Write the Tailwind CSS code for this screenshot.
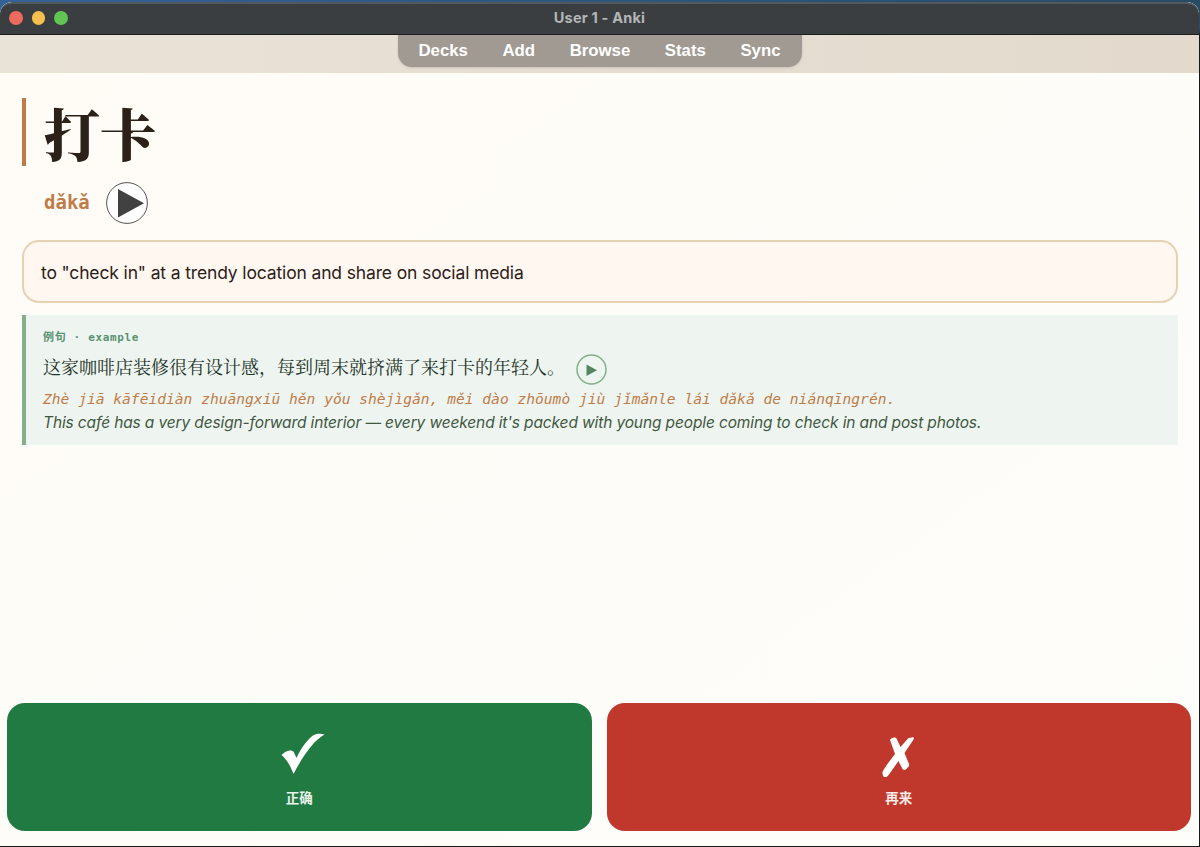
<!DOCTYPE html>
<html lang="zh-CN">
<head>
  <meta charset="utf-8">
  <title>User 1 - Anki</title>
  <script src="https://cdn.jsdelivr.net/npm/@tailwindcss/browser@4"></script>
</head>
<body class="h-[847px] w-[1200px] overflow-hidden bg-gradient-to-r from-[#356199] to-[#294a63] font-['Inter','Noto_Sans_CJK_SC',sans-serif]">
  <div class="h-full bg-[linear-gradient(to_bottom,transparent_30px,#16181a_36px)] pt-[2px]">
    <div class="flex h-[844px] w-[1199px] flex-col overflow-hidden rounded-t-[12px] bg-gradient-to-br from-[#fffcf6] to-[#fdfdfa]">

      <!-- title bar -->
      <header class="grid h-[33px] shrink-0 grid-cols-3 items-center rounded-t-[12px] border-t-2 border-b border-t-[#505a5e] border-b-[#1b1d20] bg-[#3b3e40] pr-[9px] pb-[2px] pl-[9px]">
        <div class="flex gap-[9px]">
          <span class="size-[13.5px] rounded-full bg-[#ed6a5e]"></span>
          <span class="size-[13.5px] rounded-full bg-[#f5bf4f]"></span>
          <span class="size-[13.5px] rounded-full bg-[#61c554]"></span>
        </div>
        <h1 class="text-center text-[14.5px] leading-5 font-bold tracking-[0.2px] text-[#b4b6b8]">User 1 - Anki</h1>
      </header>

      <nav class="flex h-[38px] shrink-0 justify-center bg-gradient-to-r from-[#e9e2d7] to-[#e3dacd]">
        <div class="flex h-[32px] w-[404px] items-center justify-between rounded-b-[14px] bg-[#a19a92] pr-[21px] pl-[21px] font-['Liberation_Sans',sans-serif] text-[16.8px] leading-[30px] font-bold text-white shadow-sm">
          <a>Decks</a>
          <a>Add</a>
          <a>Browse</a>
          <a>Stats</a>
          <a>Sync</a>
        </div>
      </nav>

      <main class="flex flex-1 flex-col px-[22px] pt-[25px]">
        <h2 class="h-[68px] border-l-[4px] border-[#c07c48] pl-[18px] font-['Noto_Serif_CJK_SC','Noto_Sans_CJK_SC',serif] text-[56px] leading-[68px] font-black text-[#2c2118]">打卡</h2>

        <div class="mt-4 flex h-[42px] items-center gap-4 pl-[22px]">
          <span class="pb-[3px] font-['DejaVu_Sans_Mono',monospace] text-[19px] leading-6 font-bold text-[#c07c48]">dǎkǎ</span>
          <svg class="size-[42px]" viewBox="0 0 42 42">
            <circle cx="21" cy="21" r="20.4" fill="#fff" stroke="#414141" stroke-width=".9"/>
            <path d="M12 7v28.500L38 21.300z" fill="#414141"/>
          </svg>
        </div>

        <div class="mt-4 flex h-[63px] w-[1156px] shrink-0 items-center rounded-[17px] border-2 border-[#e6d1b3] bg-[#fff7f0] pt-[4px] pl-[17px] text-[17.5px] tracking-[-0.14px] text-[#2c2118]">to "check in" at a trendy location and share on social media</div>

        <section class="mt-3 flex h-[130px] w-[1156px] shrink-0 flex-col border-l-[4px] border-[#83b08a] bg-[#eef5f1] pt-[13px] pl-[17px]">
          <p class="h-5 font-['DejaVu_Sans_Mono','Noto_Sans_CJK_SC',monospace] text-[11px] leading-5 font-bold tracking-[0.66px] text-[#5b9270]">例句 · example</p>
          <div class="flex h-10 items-center gap-[11px]">
            <p class="pb-1 font-['Noto_Serif_CJK_SC','Noto_Sans_CJK_SC',serif] text-[18px] leading-8 font-normal text-[#1d3326]">这家咖啡店装修很有设计感，每到周末就挤满了来打卡的年轻人。</p>
            <svg class="mt-[3px] size-[31px]" viewBox="0 0 31 31">
              <circle cx="15.500" cy="15.500" r="14.500" fill="none" stroke="#83b08a" stroke-width="1.500"/>
              <path d="M10.500 10.500v11.500l10.500-5.700z" fill="#53875f"/>
            </svg>
          </div>
          <p class="h-[23px] font-['DejaVu_Sans_Mono',monospace] text-[14.6px] leading-[22px] text-[#c07c48] italic">Zhè jiā kāfēidiàn zhuāngxiū hěn yǒu shèjìgǎn, měi dào zhōumò jiù jǐmǎnle lái dǎkǎ de niánqīngrén.</p>
          <p class="text-[15.5px] leading-[23px] tracking-[-0.13px] text-[#41573f] italic">This café has a very design-forward interior — every weekend it's packed with young people coming to check in and post photos.</p>
        </section>
      </main>

      <footer class="grid shrink-0 grid-cols-2 gap-[15px] pr-[8px] pb-[15px] pl-[7px] text-[13.5px] font-bold text-white">
        <button class="flex h-32 flex-col items-center rounded-[18px] bg-[#217a41] pt-[30px]">
          <svg class="ml-2 h-[42px] w-[44px]" viewBox="0 0 44 42" fill="#fff">
            <path d="M.500 22C4 18 11 15.500 13 19.500L15.500 25C20 15 26 7 32 2.500C35 .500 40 .500 43.500 1.500C32 8 22 23 12.500 41C9 32 6 27 .500 22z"/>
          </svg>
          <span class="mt-[13px] leading-5 text-white/90">正确</span>
        </button>
        <button class="flex h-32 flex-col items-center rounded-[18px] bg-[#c0382b] pt-[33px]">
          <svg class="h-[42px] w-[34px]" viewBox="0 0 34 42" fill="#fff">
            <path d="M8 4C9 1.500 13.500 .500 14.500 2.500L18.500 11L26 2.500C27.500 1 28.500 2 29.500 1.500C31.500.500 32.500 2 31.500 3.500L22.500 17L27 28C27.500 30 26.500 31 25.500 31.500C24.500 34 22 34.500 20.500 33L16.500 25L7 38.500C4.500 42.500 0 42 .500 36C3.500 30 8.500 24 13 18z"/>
          </svg>
          <span class="mt-[10px] leading-5 text-white/90">再来</span>
        </button>
      </footer>
    </div>
  </div>
</body>
</html>
